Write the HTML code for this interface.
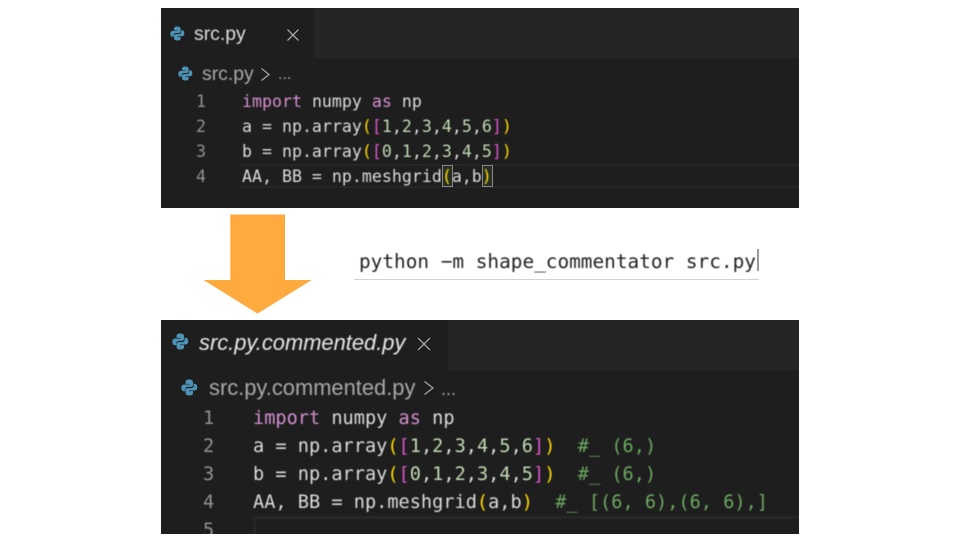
<!DOCTYPE html>
<html><head><meta charset="utf-8">
<style>
html,body{margin:0;padding:0;background:#fff;width:960px;height:540px;overflow:hidden}
.abs,.t,.panel,.ic{position:absolute}
.t{white-space:pre;line-height:1;filter:blur(.4px)}
.s{font-family:"Liberation Sans",sans-serif}
.m{font-family:"DejaVu Sans Mono","Liberation Mono",monospace}
.c1 .m{font-size:16.6px;color:#dcdcdc}
.c2 .m{font-size:18.6px;color:#dcdcdc}
.k{color:#d58fd0}.y{color:#ffd800}.p{color:#d855c8}.n{color:#c0dab2}.g{color:#6ca861}
.ln{color:#939393!important}
</style></head><body>
<svg width="0" height="0" style="position:absolute"><defs>
<g id="py"><path d="M7.6 0.5C4.6 0.5 4.3 1.8 4.3 3V4.6H8V5.2H2.8C1.3 5.2 0.3 6.3 0.3 8.2S1.3 11.5 2.8 11.5H4V9.7C4 8.4 5 7.4 6.4 7.4H9.4C10.5 7.4 11.3 6.5 11.3 5.4V3C11.3 1.6 10.2 0.5 7.6 0.5Z" fill="#4d93b5"/><path d="M8 15.5C11 15.5 11.3 14.2 11.3 13V11.4H7.6V10.8H12.8C14.3 10.8 15.3 9.7 15.3 7.8S14.3 4.5 12.8 4.5H11.9V6.3C11.9 7.6 10.9 8.6 9.5 8.6H6.2C5.1 8.6 4.3 9.5 4.3 10.6V13C4.3 14.4 5.4 15.5 8 15.5Z" fill="#4d93b5"/></g>
</defs></svg>

<div class="panel c1" style="left:161px;top:8px;width:638px;height:200px;background:#1e1e1e;overflow:hidden">
  <div class="abs" style="left:153px;top:0;width:485px;height:50px;background:#252526"></div>
  <div class="abs" style="left:80px;top:156px;width:558px;height:24px;box-sizing:border-box;border-top:2px solid #262626;border-bottom:2px solid #262626"></div>
  <svg class="ic" style="left:9px;top:18px" width="15" height="15" viewBox="0 0 16 16"><use href="#py"/></svg>
  <div class="t s" style="left:33px;top:17px;font-size:19.4px;color:#dedede">src.py</div>
  <svg class="ic" style="left:125px;top:20px" width="14" height="14" viewBox="0 0 14 14"><path d="M1.5 1.5L12.500 12.500M12.500 1.5L1.500 12.500" stroke="#b8b8b8" stroke-width="1.2" fill="none"/></svg>
  <svg class="ic" style="left:17px;top:58px" width="15" height="15" viewBox="0 0 16 16"><use href="#py"/></svg>
  <div class="t s" style="left:41px;top:57px;font-size:19.4px;color:#a8a8a8">src.py</div>
  <svg class="ic" style="left:99px;top:59px" width="11" height="15" viewBox="0 0 11 15"><path d="M1.5 1.5L9 7.500L1.500 13.500" stroke="#a0a0a0" stroke-width="1.3" fill="none"/></svg>
  <div class="t s" style="left:117px;top:59px;font-size:16px;color:#a8a8a8">...</div>

  <div class="t m ln" style="left:35px;top:86px">1</div>
  <div class="t m ln" style="left:35px;top:111px">2</div>
  <div class="t m ln" style="left:35px;top:136px">3</div>
  <div class="t m ln" style="left:35px;top:161px">4</div>
  <div class="t m" style="left:81px;top:86px"><span class="k">import</span> numpy <span class="k">as</span> np</div>
  <div class="t m" style="left:81px;top:111px">a = np.array<span class="y">(</span><span class="p">[</span><span class="n">1</span>,<span class="n">2</span>,<span class="n">3</span>,<span class="n">4</span>,<span class="n">5</span>,<span class="n">6</span><span class="p">]</span><span class="y">)</span></div>
  <div class="t m" style="left:81px;top:136px">b = np.array<span class="y">(</span><span class="p">[</span><span class="n">0</span>,<span class="n">1</span>,<span class="n">2</span>,<span class="n">3</span>,<span class="n">4</span>,<span class="n">5</span><span class="p">]</span><span class="y">)</span></div>
  <div class="abs" style="left:281px;top:157px;width:11px;height:22px;box-sizing:border-box;border:1px solid #888;background:#2a2f26"></div>
  <div class="abs" style="left:321px;top:157px;width:11px;height:22px;box-sizing:border-box;border:1px solid #888;background:#2a2f26"></div>
  <div class="t m" style="left:81px;top:161px">AA, BB = np.meshgrid<span class="y">(</span>a,b<span class="y">)</span></div>
</div>

<svg class="ic" style="left:200px;top:212px" width="116" height="104" viewBox="0 0 116 104"><path d="M30.300 2.500H85V68H111.700L57.500 101.600L3.500 68H30.300Z" fill="#ffaa3f"/></svg>

<div class="t m" style="left:359px;top:252px;font-size:19.4px;color:#222">python −m shape_commentator src.py</div>
<div class="abs" style="left:757px;top:249px;width:2px;height:22px;background:#999"></div>
<div class="abs" style="left:354px;top:279px;width:405px;height:1px;background:#d2d2d2"></div>

<div class="panel c2" style="left:161px;top:320px;width:638px;height:214px;background:#1e1e1e;overflow:hidden">
  <div class="abs" style="left:287px;top:0;width:351px;height:50px;background:#252526"></div>
  <div class="abs" style="left:92px;top:196px;width:546px;height:30px;box-sizing:border-box;border-top:3px solid #262626;border-left:3px solid #262626"></div>
  <svg class="ic" style="left:11px;top:13px" width="17" height="17" viewBox="0 0 16 16"><use href="#py"/></svg>
  <div class="t s" style="left:38px;top:12px;font-size:21.9px;color:#e8e8e8;font-style:italic">src.py.commented.py</div>
  <svg class="ic" style="left:256px;top:17px" width="14" height="14" viewBox="0 0 14 14"><path d="M1 1L13 13M13 1L1 13" stroke="#b8b8b8" stroke-width="1.2" fill="none"/></svg>
  <svg class="ic" style="left:20px;top:59px" width="17" height="17" viewBox="0 0 16 16"><use href="#py"/></svg>
  <div class="t s" style="left:48px;top:57px;font-size:21.9px;color:#a8a8a8">src.py.commented.py</div>
  <svg class="ic" style="left:262px;top:60px" width="12" height="16" viewBox="0 0 12 16"><path d="M1.500 1.500L10 8L1.500 14.500" stroke="#a0a0a0" stroke-width="1.3" fill="none"/></svg>
  <div class="t s" style="left:280px;top:60px;font-size:18px;color:#a8a8a8">...</div>

  <div class="t m ln" style="left:42px;top:90px">1</div>
  <div class="t m ln" style="left:42px;top:118px">2</div>
  <div class="t m ln" style="left:42px;top:146px">3</div>
  <div class="t m ln" style="left:42px;top:174px">4</div>
  <div class="t m ln" style="left:42px;top:202px">5</div>
  <div class="t m" style="left:92px;top:90px"><span class="k">import</span> numpy <span class="k">as</span> np</div>
  <div class="t m" style="left:92px;top:118px">a = np.array<span class="y">(</span><span class="p">[</span><span class="n">1</span>,<span class="n">2</span>,<span class="n">3</span>,<span class="n">4</span>,<span class="n">5</span>,<span class="n">6</span><span class="p">]</span><span class="y">)</span>  <span class="g">#_ (6,)</span></div>
  <div class="t m" style="left:92px;top:146px">b = np.array<span class="y">(</span><span class="p">[</span><span class="n">0</span>,<span class="n">1</span>,<span class="n">2</span>,<span class="n">3</span>,<span class="n">4</span>,<span class="n">5</span><span class="p">]</span><span class="y">)</span>  <span class="g">#_ (6,)</span></div>
  <div class="t m" style="left:92px;top:174px">AA, BB = np.meshgrid<span class="y">(</span>a,b<span class="y">)</span>  <span class="g">#_ [(6, 6),(6, 6),]</span></div>
</div>
</body></html>
